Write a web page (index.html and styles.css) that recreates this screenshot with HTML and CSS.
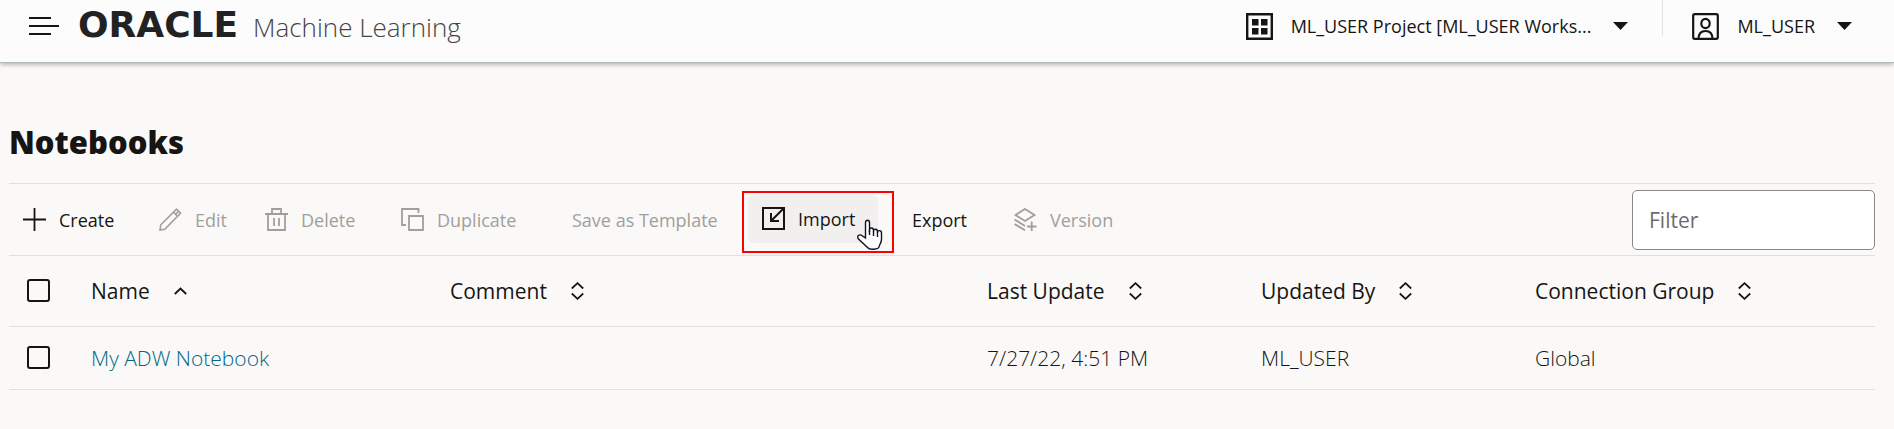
FILE: index.html
```html
<!DOCTYPE html>
<html lang="en">
<head>
<meta charset="utf-8">
<title>Notebooks</title>
<link rel="stylesheet" href="styles.css">
</head>
<body>
<header class="topbar">
  <button class="icon-button" aria-label="Menu">
    <svg width="30" height="20" viewBox="0 0 30 20" stroke="#161513" stroke-width="2"><path d="M0 2h22M0 10h30M0 18h22"/></svg>
  </button>
  <div class="brand"><span class="brand-name">ORACLE</span><span class="brand-product">Machine Learning</span></div>
  <button class="menu-button project">
    <svg width="27" height="27" viewBox="0 0 27 27"><path d="M1.2 1.2h24.6v24.6H1.2z" fill="none" stroke="#161513" stroke-width="2.4"/><path d="M6 6h6.500v6.500H6zM15 6h6.500v6.500H15zM6 15h6.500v6.500H6zM15 15h6.500v6.500H15z" fill="#161513"/></svg>
    <span class="menu-label">ML_USER Project [ML_USER Works...</span>
    <svg width="15" height="8" viewBox="0 0 15 8"><path d="M0 0h15L7.500 8z" fill="#161513"/></svg>
  </button>
  <button class="menu-button user">
    <svg width="27" height="27" viewBox="0 0 27 27" fill="none" stroke="#161513" stroke-width="2.2"><rect x="1.200" y="1.200" width="24.600" height="24.600" rx="1.500"/><ellipse cx="13.500" cy="10.500" rx="4.200" ry="4.600"/><path d="M6.500 26c0-5 2.500-8 7-8s7 3 7 8"/></svg>
    <span class="menu-label">ML_USER</span>
    <svg width="15" height="8" viewBox="0 0 15 8"><path d="M0 0h15L7.500 8z" fill="#161513"/></svg>
  </button>
</header>
<main class="page">
  <h1 class="title">Notebooks</h1>
  <div class="toolbar">
    <div class="actions">
      <button class="action"><svg width="23" height="23" viewBox="0 0 23 23" stroke="currentColor" stroke-width="1.800"><path d="M11.500 0v23M0 11.500h23"/></svg>Create</button>
      <button class="action" disabled><svg width="23" height="23" viewBox="0 0 23 23" fill="none" stroke="currentColor" stroke-width="1.600"><path d="M1 22l.8-5.200L17.500 1.200l4 4L5.800 21.200zM14.500 4.200l4 4M16.700 6.300l2.400-2.500"/></svg>Edit</button>
      <button class="action" disabled><svg width="23" height="23" viewBox="0 0 23 23" fill="none" stroke="currentColor" stroke-width="1.800"><path d="M0 6h23M3 6v16h17V6M7 6V1h9v5M9 10v8M14 10v8"/></svg>Delete</button>
      <button class="action" disabled><svg width="23" height="23" viewBox="0 0 23 23" fill="none" stroke="currentColor" stroke-width="1.800"><path d="M5 17H1V1h16.500v4M8 8h14v14H8z"/></svg>Duplicate</button>
      <button class="action" disabled>Save as Template</button>
      <div class="highlight">
        <button class="action hovered"><svg width="23" height="23" viewBox="0 0 23 23" fill="none" stroke="currentColor" stroke-width="2"><path d="M1 1h21v21H1zM21.500 1.500L9.500 13.500M9 6v8h8"/></svg>Import</button>
        <svg class="pointer" width="26" height="32" viewBox="0 0 26 32"><path d="M8.500 19V3.500C8.500 .4 12.500.4 12.500 3.500V13v-2c0-2.700 4-2.700 4 .2v1c0-2.700 4-2.600 4 .2v1c0-2.500 4-2.300 4 .5v6.500c0 3-2 5-2.500 7.500-.6 2.500-9.500 3.500-11.500.5L1.500 20c-2.500-3.500 1.500-5.300 4-3z" fill="#fff" stroke="#111122" stroke-width="1.400"/><path d="M12.500 11v5M16.500 12v5M20.500 13v5" stroke="#111122" stroke-width="1.400"/></svg>
      </div>
      <button class="action">Export</button>
      <button class="action" disabled><svg width="23" height="23" viewBox="0 0 23 23" fill="none" stroke="currentColor" stroke-width="1.800"><path d="M11 1l9.500 6-9.500 6-9.500-6zM.5 11.500L11 18M.5 16L11 22.300M13 18.500h9.500M17.700 13.500v9.500"/></svg>Version</button>
    </div>
    <input class="filter" type="text" placeholder="Filter" aria-label="Filter">
  </div>
  <table class="grid">
    <colgroup><col class="c-check"><col class="c-name"><col class="c-comment"><col class="c-date"><col class="c-by"><col></colgroup>
    <thead>
      <tr>
        <th><input class="check" type="checkbox" aria-label="Select all"></th>
        <th><span class="head">Name<svg width="13" height="18" viewBox="0 0 13 18" fill="none" stroke="#161513" stroke-width="1.800"><path d="M.8 12L6.500 6.500 12.200 12"/></svg></span></th>
        <th><span class="head">Comment<svg width="13" height="18" viewBox="0 0 13 18" fill="none" stroke="#161513" stroke-width="1.800"><path d="M.8 6.500L6.500 1.200 12.200 6.500M.8 11.500L6.500 16.800 12.200 11.500"/></svg></span></th>
        <th><span class="head">Last Update<svg width="13" height="18" viewBox="0 0 13 18" fill="none" stroke="#161513" stroke-width="1.800"><path d="M.8 6.500L6.500 1.200 12.200 6.500M.8 11.500L6.500 16.800 12.200 11.500"/></svg></span></th>
        <th><span class="head">Updated By<svg width="13" height="18" viewBox="0 0 13 18" fill="none" stroke="#161513" stroke-width="1.800"><path d="M.8 6.500L6.500 1.200 12.200 6.500M.8 11.500L6.500 16.800 12.200 11.500"/></svg></span></th>
        <th><span class="head">Connection Group<svg width="13" height="18" viewBox="0 0 13 18" fill="none" stroke="#161513" stroke-width="1.800"><path d="M.8 6.500L6.500 1.200 12.200 6.500M.8 11.500L6.500 16.800 12.200 11.500"/></svg></span></th>
      </tr>
    </thead>
    <tbody>
      <tr>
        <td><input class="check" type="checkbox" aria-label="Select My ADW Notebook"></td>
        <td><a class="link" href="#">My ADW Notebook</a></td>
        <td></td>
        <td>7/27/22, 4:51 PM</td>
        <td>ML_USER</td>
        <td>Global</td>
      </tr>
    </tbody>
  </table>
</main>
</body>
</html>
```
FILE: styles.css
```css
* { box-sizing: border-box; }
body {
  margin: 0;
  background: #faf9f8;
  color: #161513;
  font-family: "Open Sans", "Noto Sans", sans-serif;
  font-size: 21px;
}
svg { display: block; flex: none; }
button { border: 0; background: none; padding: 0; font: inherit; color: inherit; }
.topbar {
  display: flex;
  align-items: flex-start;
  height: 63px;
  padding: 0 42px 0 29px;
  background: #fcfcfc;
  border-bottom: 1px solid #b0b9bd;
  box-shadow: 0 1px 5px rgba(0, 0, 0, 0.35);
}
.icon-button { margin-top: 16px; }
.brand { display: flex; align-items: baseline; margin: 0 auto 0 19px; line-height: 50px; white-space: nowrap; }
.brand-name { min-width: 175px; font-family: "DejaVu Sans", sans-serif; font-size: 36px; font-weight: 700; color: #222; }
.brand-product { font-size: 26px; font-weight: 300; color: #444; }
.menu-button { display: flex; align-items: center; height: 36px; padding-top: 16px; font-size: 18px; white-space: nowrap; }
.menu-label { margin: 0 22px 0 18px; line-height: 36px; }
.project { padding-right: 34px; }
.user { border-left: 1px solid #e2e2e2; padding-left: 29px; }
.page { padding: 0 19px 0 9px; }
.title { margin: 57px 0 0; padding-bottom: 19px; font-size: 31px; line-height: 44px; font-weight: 800; }
.toolbar {
  display: flex;
  justify-content: space-between;
  align-items: center;
  height: 73px;
  border-top: 1px solid #e1e0df;
  border-bottom: 1px solid #e1e0df;
}
.actions { display: grid; grid-template-columns: 136px 106px 136px 171px 190px 150px 102px auto; justify-items: start; align-items: center; }
.action {
  display: flex;
  align-items: center;
  gap: 13px;
  height: 48px;
  padding: 0 14px;
  border-radius: 6px;
  font-size: 18px;
  font-weight: 500;
  white-space: nowrap;
}
.action:disabled { color: #a09f9d; font-weight: 400; }
.highlight { position: relative; margin: 4px 0 0 -6px; padding: 2px 14px 8px 4px; border: 2px solid #f00; }
.hovered { padding-right: 23px; background: #f1f0ee; }
.pointer { position: absolute; right: 9px; bottom: 0; }
.filter {
  width: 243px;
  height: 60px;
  padding: 0 16px;
  border: 1px solid #8b8988;
  border-radius: 5px;
  background: #fff;
  font: 400 21px "Open Sans", "Noto Sans", sans-serif;
}
.filter::placeholder { color: #6f6d6b; opacity: 1; }
.grid { width: 100%; table-layout: fixed; border-collapse: collapse; }
.c-check { width: 82px; }
.c-name { width: 359px; }
.c-comment { width: 537px; }
.c-date, .c-by { width: 274px; }
.grid th, .grid td { padding: 0; border-bottom: 1px solid #e1e0df; text-align: left; line-height: 30px; }
.grid th { height: 70px; font-weight: 500; }
.grid td { height: 63px; font-weight: 300; }
.head { display: flex; align-items: center; gap: 24px; }
.check {
  display: block;
  appearance: none;
  width: 23px;
  height: 23px;
  margin: 0 0 0 18px;
  border: 2px solid #161513;
  border-radius: 3px;
}
.link { color: #00688c; text-decoration: none; }
```
